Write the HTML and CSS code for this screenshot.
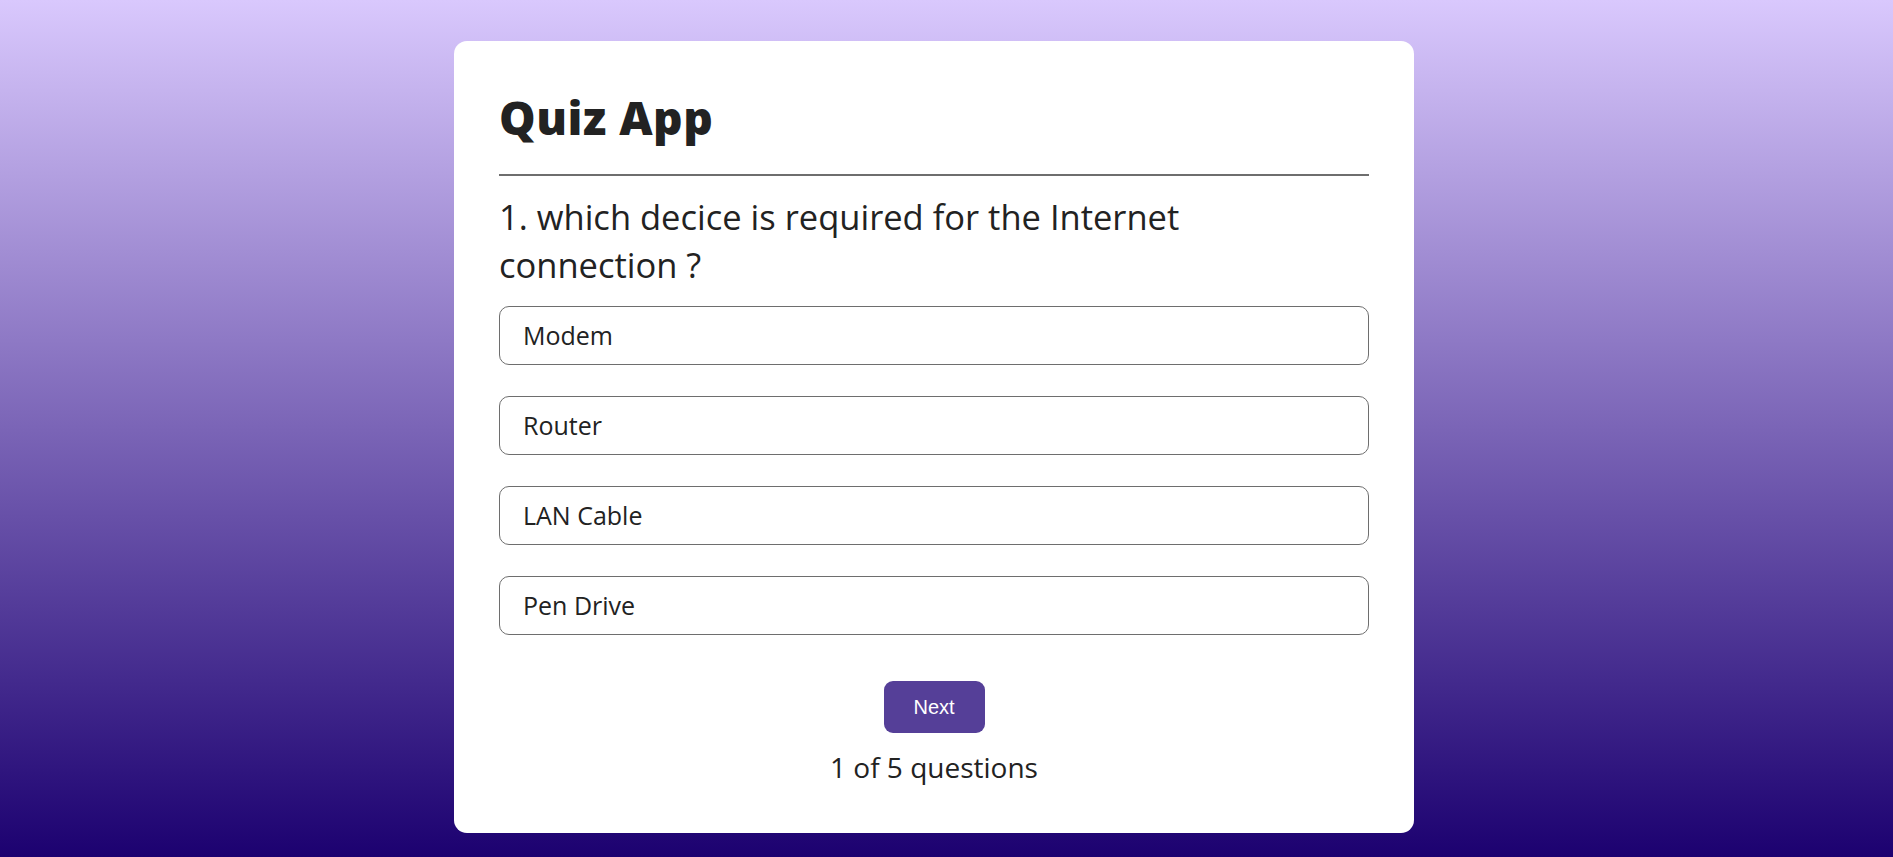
FILE: index.html
```html
<!DOCTYPE html>
<html lang="en">
<head>
<meta charset="UTF-8">
<title>Quiz App</title>
<link rel="stylesheet" href="styles.css">
</head>
<body>
<div class="page">
  <main class="app">
    <h1 class="title">Quiz App</h1>
    <div class="quiz">
      <h2 class="question">1. which decice is required for the Internet connection ?</h2>
      <div class="answers">
        <button class="option">Modem</button>
        <button class="option">Router</button>
        <button class="option">LAN Cable</button>
        <button class="option">Pen Drive</button>
      </div>
      <div class="controls">
        <button class="next">Next</button>
        <p class="progress">1 of 5 questions</p>
      </div>
    </div>
  </main>
</div>
</body>
</html>
```

FILE: styles.css
```css
* {
  box-sizing: border-box;
}

html, body {
  margin: 0;
  height: 100%;
}

body {
  background: linear-gradient(to bottom, #d9c8fd 0%, #1c0170 100%);
  font-family: "Open Sans", "DejaVu Sans", sans-serif;
  color: #222;
  overflow: hidden;
}

.page {
  display: flex;
  justify-content: center;
  padding-right: 25px;
  padding-top: 41px;
}

.app {
  width: 960px;
  background: #fff;
  border-radius: 13px;
  padding: 46px 45px 45px;
}

.title {
  margin: 0;
  font-size: 46px;
  line-height: 60px;
  font-weight: 800;
  letter-spacing: 0.5px;
  color: #222;
  padding-bottom: 27px;
  border-bottom: 2px solid #6e6e6e;
}

.question {
  margin: 17px 0 0;
  max-width: 760px;
  font-size: 34.5px;
  line-height: 48px;
  font-weight: 400;
  color: #222;
}

.answers {
  display: flex;
  flex-direction: column;
  gap: 31px;
  margin-top: 17px;
}

.option {
  display: block;
  width: 100%;
  height: 59px;
  text-align: left;
  padding: 0 23px;
  font-family: "Open Sans", "DejaVu Sans", sans-serif;
  font-size: 25px;
  line-height: 57px;
  color: #222;
  background: #fff;
  border: 1px solid #6e6e6e;
  border-radius: 10px;
}

.controls {
  display: flex;
  flex-direction: column;
  align-items: center;
  margin-top: 46px;
}

.next {
  width: 101px;
  height: 52px;
  border: none;
  border-radius: 9px;
  background: #553f98;
  color: #fff;
  font-family: "Liberation Sans", Arial, sans-serif;
  font-size: 20px;
}

.progress {
  margin: 13px 0 0;
  font-size: 28px;
  line-height: 42px;
  color: #222;
}
```
